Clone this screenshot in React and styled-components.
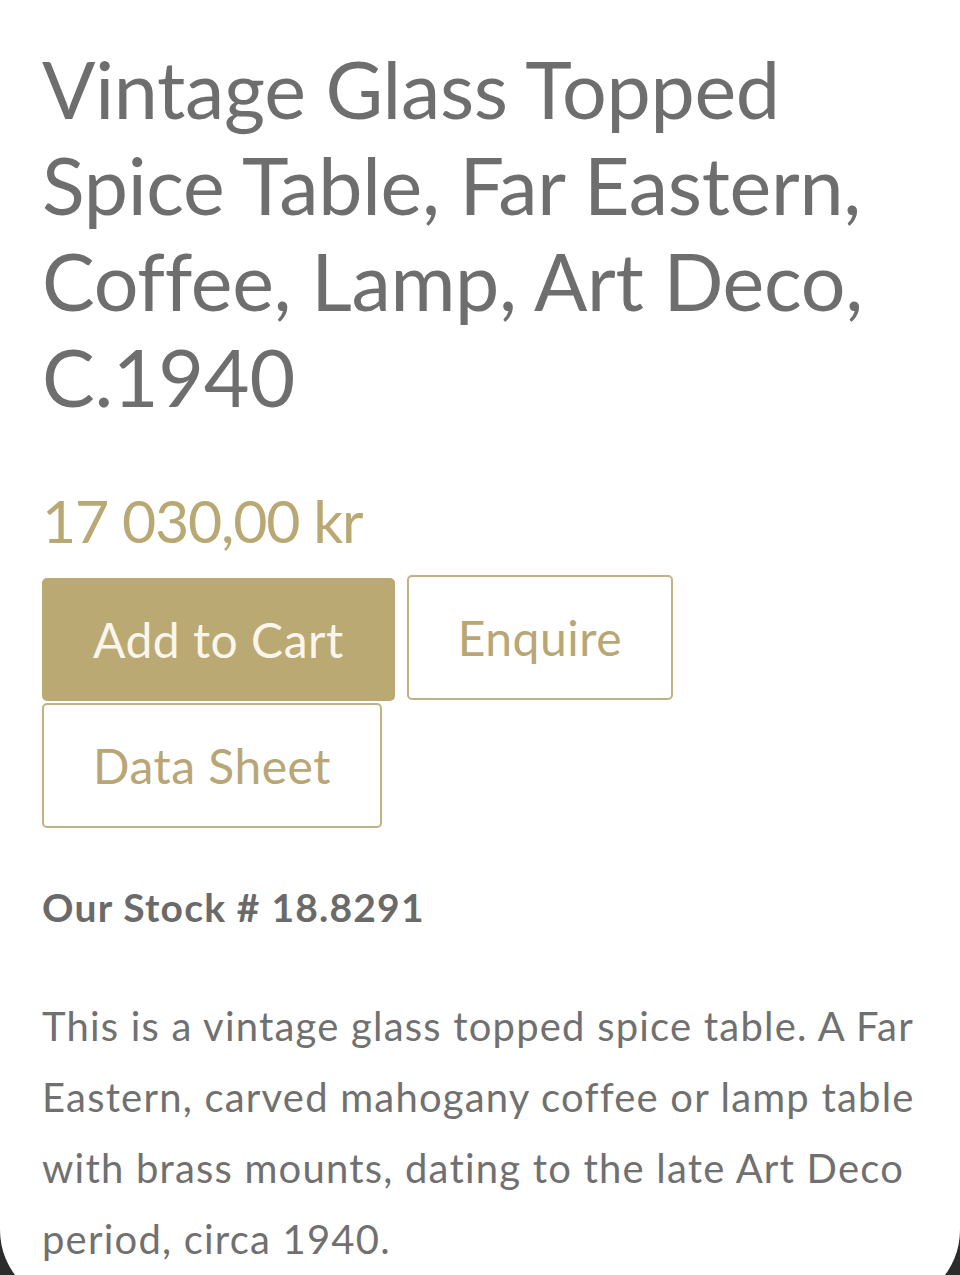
import styled, { createGlobalStyle } from 'styled-components'

const Global = createGlobalStyle`
    html, body {
        margin: 0;
        padding: 0;
        background: #2c2c2c;
    }
    body {
        font-family: Lato, 'Noto Sans', sans-serif;
        overflow: hidden;
    }
`

const product = {
    title: 'Vintage Glass Topped Spice Table, Far Eastern, Coffee, Lamp, Art Deco, C.1940',
    price: '17 030,00 kr',
    stock: '18.8291',
    description: 'This is a vintage glass topped spice table. A Far Eastern, carved mahogany coffee or lamp table with brass mounts, dating to the late Art Deco period, circa 1940.',
}

const App = () => {
    return (
        <>
            <Global />
            <Screen>
                <Title>{product.title}</Title>
                <Price>{product.price}</Price>
                <Actions>
                    <ActionButton $solid>Add to Cart</ActionButton>
                    <ActionButton>Enquire</ActionButton>
                    <ActionButton>Data Sheet</ActionButton>
                </Actions>
                <Stock>Our Stock # {product.stock}</Stock>
                <Description>{product.description}</Description>
            </Screen>
        </>
    )
}

export default App

const Screen = styled.div`
    box-sizing: border-box;
    width: 960px;
    min-height: 1305px;
    padding: 41px 28px 0 42px;
    background: #fff;
    border-radius: 0 0 75px 75px;
`
const Title = styled.h1`
    margin: 0;
    max-width: 876px;
    font-size: 79px;
    line-height: 96px;
    font-weight: 400;
    letter-spacing: -0.3px;
    color: #6e6e6e;
`
const Price = styled.div`
    margin-top: 60px;
    font-size: 59px;
    line-height: 72px;
    letter-spacing: -1.2px;
    color: #b9a874;
`
const Actions = styled.div`
    display: flex;
    flex-wrap: wrap;
    align-items: flex-start;
    column-gap: 12px;
    row-gap: 2px;
    margin-top: 18px;
`
const ActionButton = styled.button`
    box-sizing: border-box;
    height: ${p => (p.$solid ? '123px' : '125px')};
    margin-top: ${p => (p.$solid ? '3px' : '0')};
    padding: 0 49px;
    font-family: inherit;
    font-size: 48px;
    letter-spacing: 0.5px;
    color: ${p => (p.$solid ? '#faf6ec' : '#b8a675')};
    background: ${p => (p.$solid ? '#bba974' : '#fff')};
    border: 2.5px solid ${p => (p.$solid ? '#bba974' : '#c2b283')};
    border-radius: 5px;
    cursor: pointer;
`
const Stock = styled.div`
    margin-top: 56px;
    font-size: 39px;
    line-height: 46px;
    font-weight: 700;
    letter-spacing: 1.2px;
    color: #6a6a6a;
`
const Description = styled.p`
    margin: 61px 0 0 0;
    font-size: 40px;
    line-height: 71px;
    letter-spacing: 1.2px;
    color: #707070;
`
